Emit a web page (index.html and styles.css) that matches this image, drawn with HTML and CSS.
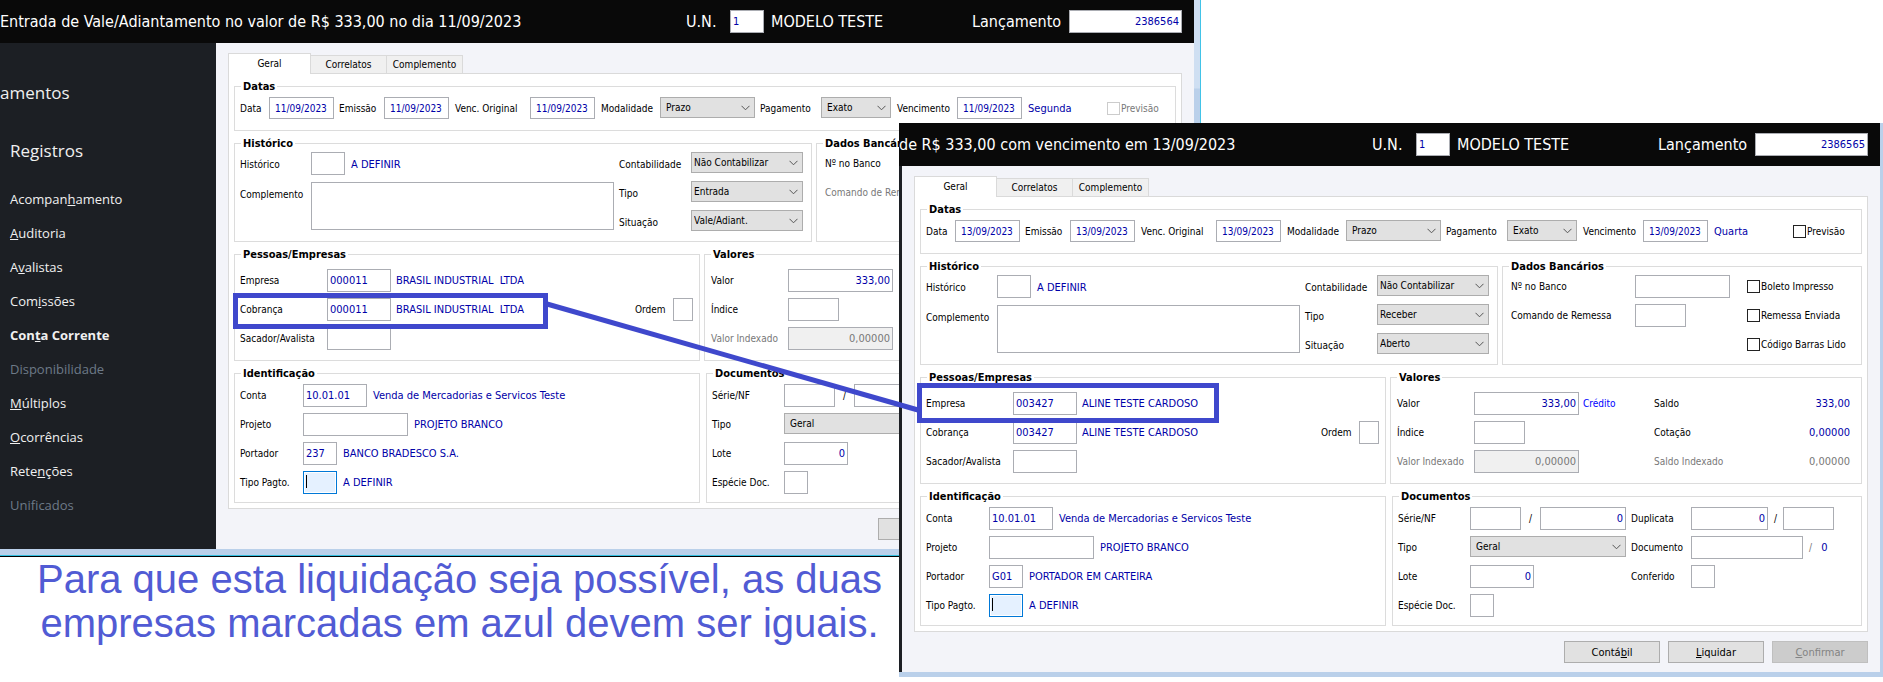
FILE: index.html
```html
<!DOCTYPE html>
<html lang="pt-BR">
<head>
    <meta charset="UTF-8">
    <meta name="viewport" content="width=device-width, initial-scale=1.0">
    <title>Lançamentos</title>
    <link rel="stylesheet" href="styles.css">
</head>
<body>
<div class="desktop">

    <!-- Vale/Adiantamento -->
    <section class="window window-back">
        <header class="titlebar">
            <h1>Entrada de Vale/Adiantamento no valor de R$ 333,00 no dia 11/09/2023</h1>
            <label for="v-un">U.N.</label>
            <input type="text" id="v-un" class="w-35" value="1">
            <span>MODELO TESTE</span>
            <label for="v-lanc">Lançamento</label>
            <input type="text" id="v-lanc" class="num" value="2386564">
        </header>
        <div class="window-body">
            <nav class="sidebar">
                <h2>amentos</h2>
                <h3>Registros</h3>
                <a href="#">Acompan<u>h</u>amento</a>
                <a href="#"><u>A</u>uditoria</a>
                <a href="#">A<u>v</u>alistas</a>
                <a href="#">Com<u>i</u>ssões</a>
                <a href="#" class="active">Con<u>t</u>a Corrente</a>
                <a href="#" class="off">Disponibilidade</a>
                <a href="#"><u>M</u>últiplos</a>
                <a href="#"><u>O</u>corrências</a>
                <a href="#">Rete<u>n</u>ções</a>
                <a href="#" class="off">Unificados</a>
            </nav>
            <main class="content">
                <div class="tabs">
                    <button type="button" class="tab selected">Geral</button>
                    <button type="button" class="tab">Correlatos</button>
                    <button type="button" class="tab">Complemento</button>
                </div>
                <form class="panel">
                    <fieldset>
                        <legend>Datas</legend>
                        <div class="dates">
                            <label for="v-data">Data</label>
                            <input type="text" id="v-data" class="date" value="11/09/2023">
                            <label for="v-emissao">Emissão</label>
                            <input type="text" id="v-emissao" class="date" value="11/09/2023">
                            <label for="v-original">Venc. Original</label>
                            <input type="text" id="v-original" class="date" value="11/09/2023">
                            <label for="v-modalidade">Modalidade</label>
                            <select id="v-modalidade" class="w-95 roomy"><option>Prazo</option></select>
                            <label for="v-pagamento">Pagamento</label>
                            <select id="v-pagamento" class="w-70 roomy"><option>Exato</option></select>
                            <label for="v-vencimento">Vencimento</label>
                            <input type="text" id="v-vencimento" class="date" value="11/09/2023">
                            <span class="value">Segunda</span>
                            <label class="check off"><input type="checkbox" disabled>Previsão</label>
                        </div>
                    </fieldset>
                    <div class="pair pair-top">
                        <fieldset>
                            <legend>Histórico</legend>
                            <div class="history">
                                <div class="history-text">
                                    <label for="v-historico">Histórico</label>
                                    <div class="cell">
                                        <input type="text" id="v-historico" class="w-35">
                                        <span class="value">A DEFINIR</span>
                                    </div>
                                    <label for="v-complemento">Complemento</label>
                                    <textarea id="v-complemento"></textarea>
                                </div>
                                <div class="history-options">
                                    <label for="v-contab">Contabilidade</label>
                                    <select id="v-contab"><option>Não Contabilizar</option></select>
                                    <label for="v-tipo">Tipo</label>
                                    <select id="v-tipo"><option>Entrada</option></select>
                                    <label for="v-situacao">Situação</label>
                                    <select id="v-situacao"><option>Vale/Adiant.</option></select>
                                </div>
                            </div>
                        </fieldset>
                        <fieldset>
                            <legend>Dados Bancários</legend>
                            <div class="bank">
                                <label for="v-banco">Nº no Banco</label>
                                <input type="text" id="v-banco" class="w-95">
                                <span></span>
                                <label for="v-comando" class="off">Comando de Remessa</label>
                                <input type="text" id="v-comando" class="w-50" disabled>
                            </div>
                        </fieldset>
                    </div>
                    <div class="pair pair-people">
                        <fieldset>
                            <legend>Pessoas/Empresas</legend>
                            <div class="people">
                                <label for="v-empresa">Empresa</label>
                                <input type="text" id="v-empresa" class="w-65" value="000011">
                                <span class="value company">BRASIL INDUSTRIAL&nbsp; LTDA</span>
                                <label for="v-cobranca">Cobrança</label>
                                <input type="text" id="v-cobranca" class="w-65" value="000011">
                                <span class="value">BRASIL INDUSTRIAL&nbsp; LTDA</span>
                                <label for="v-ordem">Ordem</label>
                                <input type="text" id="v-ordem">
                                <label for="v-sacador">Sacador/Avalista</label>
                                <input type="text" id="v-sacador" class="w-65">
                            </div>
                        </fieldset>
                        <fieldset>
                            <legend>Valores</legend>
                            <div class="amounts">
                                <label for="v-valor">Valor</label>
                                <input type="text" id="v-valor" class="w-105 num row-end" value="333,00">
                                <label for="v-indice">Índice</label>
                                <input type="text" id="v-indice" class="w-50 row-end">
                                <label for="v-indexado" class="off">Valor Indexado</label>
                                <input type="text" id="v-indexado" class="w-105 num row-end" value="0,00000" disabled>
                            </div>
                        </fieldset>
                    </div>
                    <div class="pair pair-docs">
                        <fieldset>
                            <legend>Identificação</legend>
                            <div class="ident">
                                <label for="v-conta">Conta</label>
                                <div class="cell">
                                    <input type="text" id="v-conta" class="w-65" value="10.01.01">
                                    <span class="value">Venda de Mercadorias e Servicos Teste</span>
                                </div>
                                <label for="v-projeto">Projeto</label>
                                <div class="cell">
                                    <input type="text" id="v-projeto" class="w-105">
                                    <span class="value">PROJETO BRANCO</span>
                                </div>
                                <label for="v-portador">Portador</label>
                                <div class="cell">
                                    <input type="text" id="v-portador" class="w-35" value="237">
                                    <span class="value">BANCO BRADESCO S.A.</span>
                                </div>
                                <label for="v-pagto">Tipo Pagto.</label>
                                <div class="cell">
                                    <input type="text" id="v-pagto" class="w-35 current">
                                    <span class="value">A DEFINIR</span>
                                </div>
                            </div>
                        </fieldset>
                        <fieldset>
                            <legend>Documentos</legend>
                            <div class="docs">
                                <label for="v-serie">Série/NF</label>
                                <div class="cell split row-end">
                                    <input type="text" id="v-serie" class="w-50">
                                    <span>/</span>
                                    <input type="text" aria-label="NF" class="w-85">
                                </div>
                                <label for="v-doctipo">Tipo</label>
                                <select id="v-doctipo" class="wide roomy row-end"><option>Geral</option></select>
                                <label for="v-lote">Lote</label>
                                <input type="text" id="v-lote" class="w-65 num row-end" value="0">
                                <label for="v-especie">Espécie Doc.</label>
                                <input type="text" id="v-especie" class="w-25 row-end">
                            </div>
                        </fieldset>
                    </div>
                </form>
                <div class="actions">
                    <button type="button">Contá<u>b</u>il</button>
                    <button type="button"><u>L</u>iquidar</button>
                    <button type="button" disabled><u>C</u>onfirmar</button>
                </div>
            </main>
        </div>
    </section>

    <p class="note">Para que esta liquidação seja possível, as duas<br>empresas marcadas em azul devem ser iguais.</p>

    <!-- Título a receber -->
    <section class="window window-front">
        <header class="titlebar">
            <h1>de R$ 333,00 com vencimento em 13/09/2023</h1>
            <label for="r-un">U.N.</label>
            <input type="text" id="r-un" class="w-35" value="1">
            <span>MODELO TESTE</span>
            <label for="r-lanc">Lançamento</label>
            <input type="text" id="r-lanc" class="num" value="2386565">
        </header>
        <div class="window-body">
            <main class="content">
                <div class="tabs">
                    <button type="button" class="tab selected">Geral</button>
                    <button type="button" class="tab">Correlatos</button>
                    <button type="button" class="tab">Complemento</button>
                </div>
                <form class="panel">
                    <fieldset>
                        <legend>Datas</legend>
                        <div class="dates">
                            <label for="r-data">Data</label>
                            <input type="text" id="r-data" class="date" value="13/09/2023">
                            <label for="r-emissao">Emissão</label>
                            <input type="text" id="r-emissao" class="date" value="13/09/2023">
                            <label for="r-original">Venc. Original</label>
                            <input type="text" id="r-original" class="date" value="13/09/2023">
                            <label for="r-modalidade">Modalidade</label>
                            <select id="r-modalidade" class="w-95 roomy"><option>Prazo</option></select>
                            <label for="r-pagamento">Pagamento</label>
                            <select id="r-pagamento" class="w-70 roomy"><option>Exato</option></select>
                            <label for="r-vencimento">Vencimento</label>
                            <input type="text" id="r-vencimento" class="date" value="13/09/2023">
                            <span class="value">Quarta</span>
                            <label class="check"><input type="checkbox">Previsão</label>
                        </div>
                    </fieldset>
                    <div class="pair pair-top">
                        <fieldset>
                            <legend>Histórico</legend>
                            <div class="history">
                                <div class="history-text">
                                    <label for="r-historico">Histórico</label>
                                    <div class="cell">
                                        <input type="text" id="r-historico" class="w-35">
                                        <span class="value">A DEFINIR</span>
                                    </div>
                                    <label for="r-complemento">Complemento</label>
                                    <textarea id="r-complemento"></textarea>
                                </div>
                                <div class="history-options">
                                    <label for="r-contab">Contabilidade</label>
                                    <select id="r-contab"><option>Não Contabilizar</option></select>
                                    <label for="r-tipo">Tipo</label>
                                    <select id="r-tipo"><option>Receber</option></select>
                                    <label for="r-situacao">Situação</label>
                                    <select id="r-situacao"><option>Aberto</option></select>
                                </div>
                            </div>
                        </fieldset>
                        <fieldset>
                            <legend>Dados Bancários</legend>
                            <div class="bank">
                                <label for="r-banco">Nº no Banco</label>
                                <input type="text" id="r-banco" class="w-95">
                                <label class="check"><input type="checkbox">Boleto Impresso</label>
                                <label for="r-comando">Comando de Remessa</label>
                                <input type="text" id="r-comando" class="w-50">
                                <label class="check"><input type="checkbox">Remessa Enviada</label>
                                <label class="check last"><input type="checkbox">Código Barras Lido</label>
                            </div>
                        </fieldset>
                    </div>
                    <div class="pair pair-people">
                        <fieldset>
                            <legend>Pessoas/Empresas</legend>
                            <div class="people">
                                <label for="r-empresa">Empresa</label>
                                <input type="text" id="r-empresa" class="w-65" value="003427">
                                <span class="value company">ALINE TESTE CARDOSO</span>
                                <label for="r-cobranca">Cobrança</label>
                                <input type="text" id="r-cobranca" class="w-65" value="003427">
                                <span class="value">ALINE TESTE CARDOSO</span>
                                <label for="r-ordem">Ordem</label>
                                <input type="text" id="r-ordem">
                                <label for="r-sacador">Sacador/Avalista</label>
                                <input type="text" id="r-sacador" class="w-65">
                            </div>
                        </fieldset>
                        <fieldset>
                            <legend>Valores</legend>
                            <div class="amounts">
                                <label for="r-valor">Valor</label>
                                <div class="cell tight">
                                    <input type="text" id="r-valor" class="w-105 num" value="333,00">
                                    <span class="credit">Crédito</span>
                                </div>
                                <span>Saldo</span>
                                <span class="value total">333,00</span>
                                <label for="r-indice">Índice</label>
                                <input type="text" id="r-indice" class="w-50">
                                <span>Cotação</span>
                                <span class="value total">0,00000</span>
                                <label for="r-indexado" class="off">Valor Indexado</label>
                                <input type="text" id="r-indexado" class="w-105 num" value="0,00000" disabled>
                                <span class="off">Saldo Indexado</span>
                                <span class="off total">0,00000</span>
                            </div>
                        </fieldset>
                    </div>
                    <div class="pair pair-docs">
                        <fieldset>
                            <legend>Identificação</legend>
                            <div class="ident">
                                <label for="r-conta">Conta</label>
                                <div class="cell">
                                    <input type="text" id="r-conta" class="w-65" value="10.01.01">
                                    <span class="value">Venda de Mercadorias e Servicos Teste</span>
                                </div>
                                <label for="r-projeto">Projeto</label>
                                <div class="cell">
                                    <input type="text" id="r-projeto" class="w-105">
                                    <span class="value">PROJETO BRANCO</span>
                                </div>
                                <label for="r-portador">Portador</label>
                                <div class="cell">
                                    <input type="text" id="r-portador" class="w-35" value="G01">
                                    <span class="value">PORTADOR EM CARTEIRA</span>
                                </div>
                                <label for="r-pagto">Tipo Pagto.</label>
                                <div class="cell">
                                    <input type="text" id="r-pagto" class="w-35 current">
                                    <span class="value">A DEFINIR</span>
                                </div>
                            </div>
                        </fieldset>
                        <fieldset>
                            <legend>Documentos</legend>
                            <div class="docs">
                                <label for="r-serie">Série/NF</label>
                                <div class="cell split">
                                    <input type="text" id="r-serie" class="w-50">
                                    <span>/</span>
                                    <input type="text" aria-label="NF" class="w-85 num" value="0">
                                </div>
                                <label for="r-duplicata">Duplicata</label>
                                <div class="cell">
                                    <input type="text" id="r-duplicata" class="w-75 num" value="0">
                                    <span>/</span>
                                    <input type="text" aria-label="Parcela" class="w-50">
                                </div>
                                <label for="r-doctipo">Tipo</label>
                                <select id="r-doctipo" class="wide roomy"><option>Geral</option></select>
                                <label for="r-documento">Documento</label>
                                <div class="cell">
                                    <input type="text" id="r-documento" class="w-110">
                                    <span class="off">/</span>
                                    <span class="value">&nbsp;0</span>
                                </div>
                                <label for="r-lote">Lote</label>
                                <input type="text" id="r-lote" class="w-65 num" value="0">
                                <label for="r-conferido">Conferido</label>
                                <input type="text" id="r-conferido" class="w-25">
                                <label for="r-especie">Espécie Doc.</label>
                                <input type="text" id="r-especie" class="w-25">
                            </div>
                        </fieldset>
                    </div>
                </form>
                <div class="actions">
                    <button type="button">Contá<u>b</u>il</button>
                    <button type="button"><u>L</u>iquidar</button>
                    <button type="button" disabled><u>C</u>onfirmar</button>
                </div>
            </main>
        </div>
    </section>

    <!-- Blue marks linking the two companies -->
    <svg class="marks" aria-hidden="true">
        <rect x="235.5" y="295.5" width="310" height="31"/>
        <rect x="919.5" y="385.5" width="297" height="35"/>
        <line x1="547" y1="304" x2="918" y2="410"/>
    </svg>
</div>
</body>
</html>
```
FILE: styles.css
```css
* {
    box-sizing: border-box;
}
body {
    margin: 0;
    background: #fff;
    color: #000;
    font-family: "DejaVu Sans Condensed", "DejaVu Sans", sans-serif;
    font-size: 10px;
}
.desktop {
    position: relative;
    overflow: hidden;
    min-height: 100vh;
}
.window {
    background: #f3f4f9;
}
.window-back {
    margin-right: 682px;
    border-right: 1px solid #41c3e8;
    border-bottom: 1px solid #000;
    padding: 0 6px 7px 0;
    background:
        linear-gradient(#33bfe0, #33bfe0) bottom / 100% 1px no-repeat,
        linear-gradient(#bad0ea, #bad0ea) bottom / 100% 7px no-repeat,
        linear-gradient(#cfdff2 88px, #bad0ea 89px) right / 6px 100% no-repeat,
        #f3f4f9;
}
.window-front {
    position: absolute;
    top: 123px;
    left: 899px;
    right: 0;
    border-right: 3px solid #bad0ea;
    border-bottom: 5px solid #bad0ea;
}
.window-front .window-body {
    border-left: 3px solid #1c1f24;
}
.window-body {
    display: flex;
}

/* Title bar */
.titlebar {
    display: grid;
    grid-template-columns: 1fr 44px 41px 201px 97px 113px;
    align-items: center;
    height: 43px;
    padding-right: 12px;
    background: #090909;
    color: #fff;
    font-size: 16px;
    white-space: nowrap;
}
.titlebar h1 {
    margin: 0;
    font-size: 16px;
    font-weight: normal;
}

/* Sidebar */
.sidebar {
    width: 216px;
    flex: none;
    background: #1c1f24;
    color: #f0f0f0;
    font-family: "Open Sans", "Noto Sans", sans-serif;
    padding-top: 38px;
}
.sidebar h2, .sidebar h3 {
    margin: 0;
    font-size: 17px;
    font-weight: normal;
    line-height: 24px;
}
.sidebar h3 {
    margin: 34px 0 19px;
    padding-left: 10px;
}
.sidebar a {
    display: block;
    padding-left: 10px;
    color: inherit;
    font-size: 13px;
    line-height: 34px;
    text-decoration: none;
}
.sidebar a.active {
    font-weight: bold;
}
.sidebar a.off {
    color: #6d7a88;
}

/* Tabs and panel */
.content {
    flex: 1;
    min-width: 0;
    padding: 10px 12px 9px;
}
.tabs {
    display: flex;
    align-items: flex-end;
    height: 20px;
}
.tab {
    width: 76px;
    height: 18px;
    padding: 0;
    border: 1px solid #dadada;
    border-width: 1px 1px 0 0;
    background: #f0f0f0;
    color: #000;
    font: inherit;
}
.tab.selected {
    width: 83px;
    height: 21px;
    margin-bottom: -1px;
    padding-bottom: 2px;
    border-left-width: 1px;
    background: #fff;
    z-index: 1;
}
.panel {
    border: 1px solid #dadada;
    background: #fff;
    padding: 5px;
    display: grid;
    gap: 5px;
}
.pair {
    display: grid;
    gap: 4px;
}
.pair-top {
    grid-template-columns: 578fr 360fr;
}
.pair-people {
    grid-template-columns: 466fr 472fr;
}
.pair-docs {
    grid-template-columns: 466fr 470fr;
    gap: 6px;
}
fieldset {
    min-width: 0;
    margin: 0;
    padding: 0;
    border: 1px solid #dcdcdc;
    line-height: 23px;
    white-space: nowrap;
}
legend {
    margin-left: 6px;
    padding: 1px 2px 0;
    font-size: 11px;
    font-weight: bold;
    line-height: 14px;
}

/* Group bodies */
.dates, .history, .bank, .people, .amounts, .ident, .docs,
.history-text, .history-options {
    display: grid;
    grid-auto-rows: 29px;
    align-items: start;
}
.dates {
    grid-template-columns: 29px 70px 45px 71px 75px 71px 59px 100px 61px 76px 60px 71px 79px 1fr;
    padding: 3px 5px 4px;
}
.history {
    grid-template-columns: 1fr 184px;
    grid-auto-rows: auto;
    padding: 1px 8px 2px 5px;
    line-height: 25px;
}
.history-text {
    grid-template-columns: 71px 1fr;
    grid-auto-rows: 30px;
    padding-right: 5px;
}
.history-options {
    grid-template-columns: 72px 112px;
}
.bank {
    grid-template-columns: 124px 112px 1fr;
    padding: 1px 8px 2px;
}
.people {
    grid-template-columns: 87px 69px 1fr 38px 20px;
    padding: 7px 6px 4px 5px;
}
.people .company {
    grid-column: span 3;
}
.amounts {
    grid-template-columns: 77px 180px 80px 1fr;
    padding: 7px 11px 4px 6px;
}
.ident {
    grid-template-columns: 63px 1fr;
    padding: 3px 5px 2px;
}
.docs {
    grid-template-columns: 72px 161px 60px 1fr;
    padding: 3px 5px 2px;
}
.row-end {
    grid-column: 2 / -1;
}
.cell {
    display: flex;
    gap: 6px;
}
.cell.tight {
    gap: 4px;
}
.cell.split {
    gap: 8px;
}

/* Controls */
input, select, textarea {
    font: inherit;
    font-size: 11px;
    margin: 0;
    color: #0000a8;
    background: #fff;
    border: 1px solid #abadb3;
    border-radius: 0;
}
input {
    width: 100%;
    height: 23px;
    padding: 0 2px;
}
select {
    appearance: none;
    width: 100%;
    height: 21px;
    padding: 0 16px 0 2px;
    border-color: #adadad;
    background: #e1e1e1 url("data:image/svg+xml,%3Csvg xmlns='http://www.w3.org/2000/svg' width='9' height='6'%3E%3Cpath d='M.5 .8L4.5 4.8L8.5 .8' fill='none' stroke='%23555'/%3E%3C/svg%3E") right 4px center no-repeat;
    color: #000;
    font-size: 10px;
    line-height: 19px;
}
select.roomy {
    padding-left: 5px;
}
textarea {
    width: 100%;
    height: 48px;
    resize: none;
}
input:disabled {
    background: #f0f0f0;
    color: #787878;
}
.date {
    width: 65px;
    height: 22px;
    padding: 1px 0 0 5px;
    font-size: 10px;
}
.num {
    text-align: right;
}
/* field being edited, with its caret */
.current {
    border-color: #0078d7;
    background: linear-gradient(#000, #000) 2px 3px / 1px 13px no-repeat, #e5f1ff;
    box-shadow: inset 0 0 0 1px #fff;
}
.w-25 { width: 24px; }
.w-35 { width: 34px; }
.w-50 { width: 51px; }
.w-65 { width: 64px; }
.w-70 { width: 70px; }
.w-75 { width: 77px; }
.w-85 { width: 86px; }
.w-95 { width: 95px; }
.w-105 { width: 105px; }
.w-110 { width: 112px; }
.wide { width: 156px; }

.check {
    display: flex;
    align-items: center;
    gap: 1px;
}
.check.last {
    grid-column: 3;
}
.check input {
    appearance: none;
    width: 13px;
    height: 13px;
    padding: 0;
    border-color: #222;
    background: #fff;
}
.check.off input {
    border-color: #ccc;
}
.value {
    color: #0000a8;
    font-size: 11px;
}
.credit {
    color: #0000ff;
}
.off {
    color: #787878;
}
.total {
    text-align: right;
    font-size: 11px;
}

/* Bottom buttons */
.actions {
    display: flex;
    justify-content: flex-end;
    gap: 8px;
    padding-top: 9px;
}
.actions button {
    width: 96px;
    height: 22px;
    padding: 0;
    border: 1px solid #adadad;
    background: #e1e1e1;
    color: #000;
    font: inherit;
    font-size: 11px;
}
.actions button:disabled {
    border-color: #bfbfbf;
    background: #ccc;
    color: #838383;
}

.note {
    margin: 0 964px 0 0;
    color: #515bd4;
    font-family: "Liberation Sans", Arial, sans-serif;
    font-size: 40px;
    line-height: 44px;
    text-align: center;
    white-space: nowrap;
}

.marks {
    position: absolute;
    inset: 0;
    width: 100%;
    height: 100%;
    fill: none;
    stroke: #3f48cc;
    stroke-width: 5;
    pointer-events: none;
}
```
